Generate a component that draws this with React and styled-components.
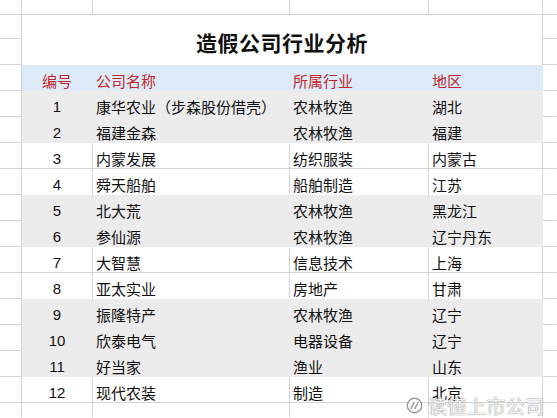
import React from 'react'
import styled, { createGlobalStyle } from 'styled-components'

const GlobalStyle = createGlobalStyle`
  html, body { margin: 0; padding: 0; background: #fff; }
  body { font-family: "Noto Sans CJK SC", "Liberation Sans", sans-serif; overflow: hidden; }
`

const GRID = '#d4d4d4'
const fills = { blue: '#dcebf7', gray: '#ececec' }

const rows = [
  [1, '康华农业（步森股份借壳）', '农林牧渔', '湖北', true],
  [2, '福建金森', '农林牧渔', '福建', true],
  [3, '内蒙发展', '纺织服装', '内蒙古', false],
  [4, '舜天船舶', '船舶制造', '江苏', false],
  [5, '北大荒', '农林牧渔', '黑龙江', true],
  [6, '参仙源', '农林牧渔', '辽宁丹东', true],
  [7, '大智慧', '信息技术', '上海', false],
  [8, '亚太实业', '房地产', '甘肃', false],
  [9, '振隆特产', '农林牧渔', '辽宁', true],
  [10, '欣泰电气', '电器设备', '辽宁', true],
  [11, '好当家', '渔业', '山东', true],
  [12, '现代农装', '制造', '北京', false],
]

const Sheet = styled.div`
  position: relative;
  display: grid;
  grid-template-columns: 22px 71px 197px 139px 114px 1fr;
  grid-template-rows: 15px 24px 26px repeat(13, 26px) 1fr;
  width: 557px;
  height: 418px;
  background: #fff;
`

const Cell = styled.div`
  box-sizing: border-box;
  display: flex;
  align-items: center;
  justify-content: ${p => (p.$center ? 'center' : 'flex-start')};
  padding: 6px 0 0 ${p => (p.$center ? '0' : '3px')};
  font-size: 15px;
  line-height: 1;
  white-space: nowrap;
  color: ${p => (p.$red ? '#c0272d' : '#111')};
  background: ${p => (p.$fill ? fills[p.$fill] : '#fff')};
  border-right: 1px solid ${p => (p.$fill || p.$noRight ? 'transparent' : GRID)};
  border-bottom: 1px solid ${p => (p.$fill || p.$noBottom ? 'transparent' : GRID)};
`

const Num = styled.span`
  font-family: "Liberation Sans", sans-serif;
  font-size: 15px;
`

const Title = styled.div`
  grid-column: 2 / 6;
  grid-row: 2 / 4;
  box-sizing: border-box;
  display: flex;
  align-items: center;
  justify-content: center;
  padding-top: 4px;
  border-right: 1px solid ${GRID};
  font-size: 21px;
  font-weight: 700;
  color: #111;
  letter-spacing: 0.5px;
`

const Watermark = styled.div`
  position: absolute;
  left: 406px;
  top: 392px;
  display: flex;
  align-items: center;
  gap: 5px;
`

const MarkText = styled.span`
  font-size: 19px;
  color: rgba(255, 255, 255, 0.92);
  text-shadow: 0 0 1px #8a8a8a, 0 0 1px #8a8a8a;
  letter-spacing: 0.5px;
`

function Logo() {
  return (
    <svg width="17" height="17" viewBox="0 0 17 17">
      <circle cx="8.5" cy="8.5" r="7.2" fill="rgba(255,255,255,0.8)" stroke="#9a9a9a" strokeWidth="1.4" />
      <path d="M5 11.5 L8 5.5 M9 11.5 L12 5.5" stroke="#9a9a9a" strokeWidth="1.5" strokeLinecap="round" fill="none" />
    </svg>
  )
}

function BlankRow({ last }) {
  return (
    <>
      <Cell $noBottom={last} />
      <Cell $noBottom={last} />
      <Cell $noBottom={last} />
      <Cell $noBottom={last} />
      <Cell $noBottom={last} />
      <Cell $noRight $noBottom={last} />
    </>
  )
}

export default function App() {
  return (
    <>
      <GlobalStyle />
      <Sheet>
        <BlankRow />
        <Title>造假公司行业分析</Title>
        <Cell />
        <Cell $noRight />
        <Cell />
        <Cell $noRight />

        <Cell />
        <Cell $fill="blue" $red $center>编号</Cell>
        <Cell $fill="blue" $red>公司名称</Cell>
        <Cell $fill="blue" $red>所属行业</Cell>
        <Cell $fill="blue" $red>地区</Cell>
        <Cell $noRight />

        {rows.map(([no, name, trade, area, shaded], i) => {
          const fill = shaded ? 'gray' : undefined
          const nextShaded = rows[i + 1] && rows[i + 1][4]
          return (
            <React.Fragment key={no}>
              <Cell />
              <Cell $fill={fill} $center $noBottom={nextShaded}><Num>{no}</Num></Cell>
              <Cell $fill={fill} $noBottom={nextShaded}>{name}</Cell>
              <Cell $fill={fill} $noBottom={nextShaded}>{trade}</Cell>
              <Cell $fill={fill} $noBottom={nextShaded}>{area}</Cell>
              <Cell $noRight />
            </React.Fragment>
          )
        })}

        <BlankRow last />

        <Watermark>
          <Logo />
          <MarkText>读懂上市公司</MarkText>
        </Watermark>
      </Sheet>
    </>
  )
}
